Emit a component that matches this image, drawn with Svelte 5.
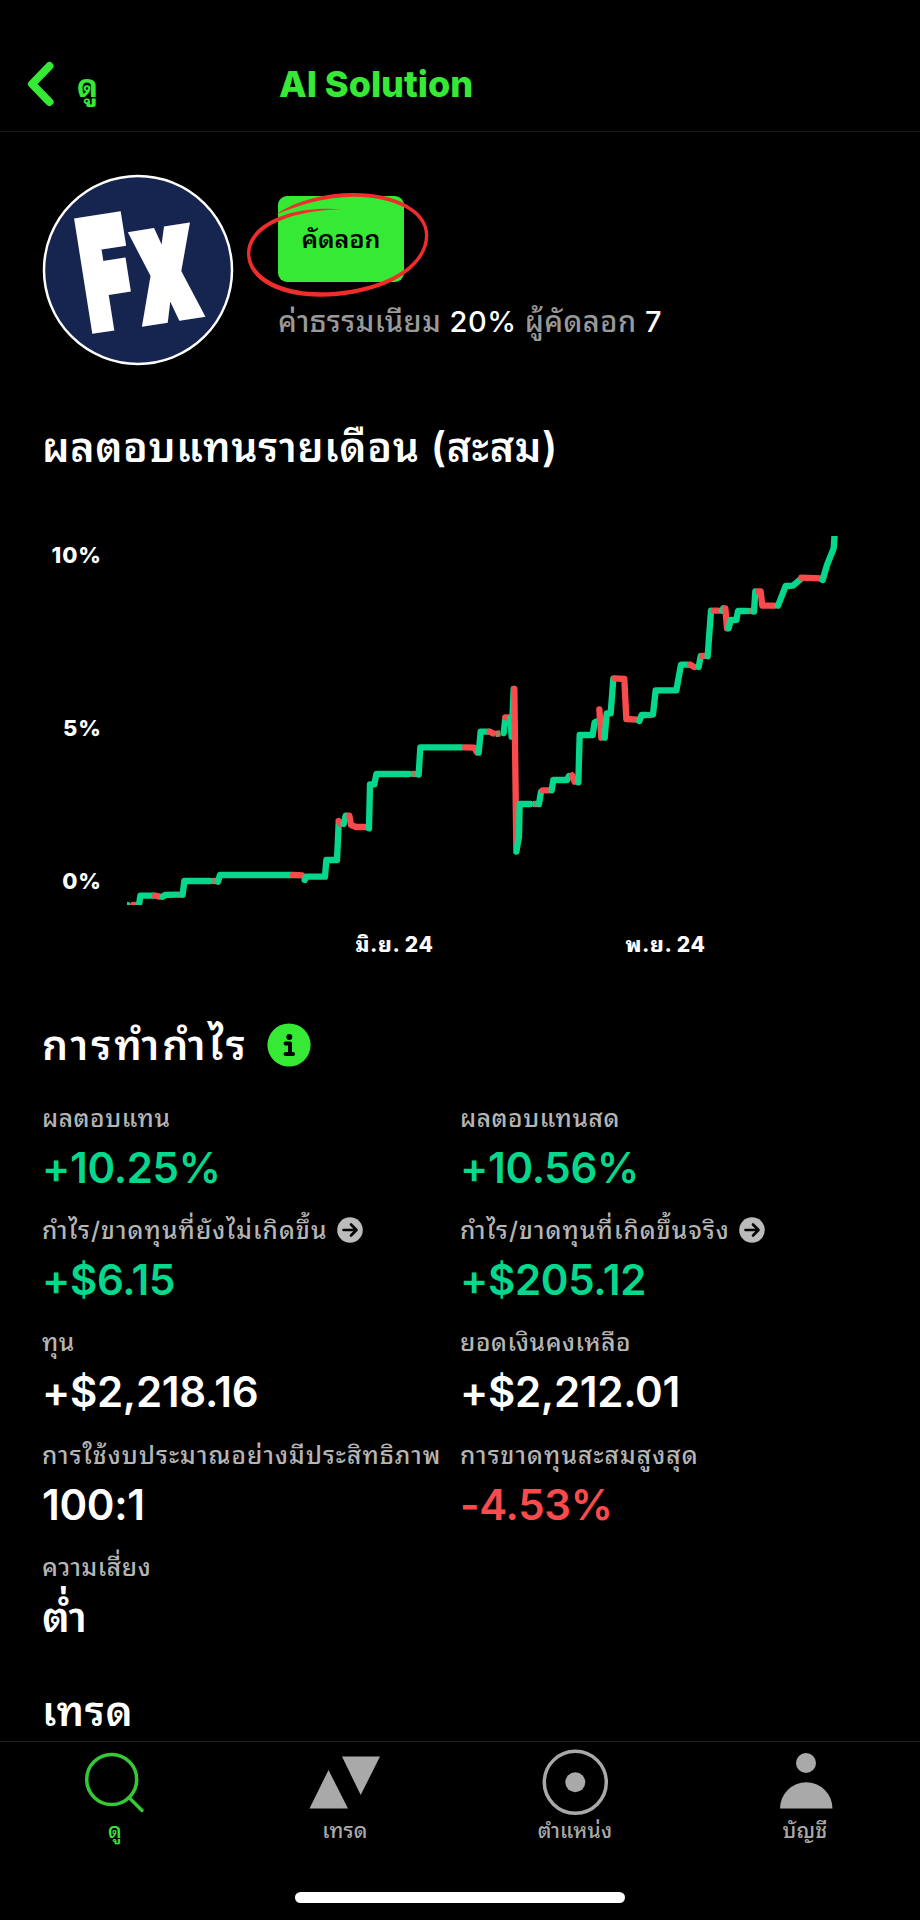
<script>
    let activeTab = 0;

    const axisY = ['10%', '5%', '0%'];
    const axisX = ['มิ.ย. 24', 'พ.ย. 24'];

    const stats = [
        { label: 'ผลตอบแทน', value: '+10.25%', tone: 'up' },
        { label: 'ผลตอบแทนสด', value: '+10.56%', tone: 'up' },
        { label: 'กำไร/ขาดทุนที่ยังไม่เกิดขึ้น', value: '+$6.15', tone: 'up', link: true },
        { label: 'กำไร/ขาดทุนที่เกิดขึ้นจริง', value: '+$205.12', tone: 'up', link: true },
        { label: 'ทุน', value: '+$2,218.16' },
        { label: 'ยอดเงินคงเหลือ', value: '+$2,212.01' },
        { label: 'การใช้งบประมาณอย่างมีประสิทธิภาพ', value: '100:1' },
        { label: 'การขาดทุนสะสมสูงสุด', value: '-4.53%', tone: 'down' },
        { label: 'ความเสี่ยง', value: 'ต่ำ' },
    ];

    const tabs = ['ดู', 'เทรด', 'ตำแหน่ง', 'บัญชี'];

    // g = gain, r = loss, m = flat
    const line = [
        ['m', '440,1124 457,1124'],
        ['m', '543,1083 562,1083'],
        ['m', '1143,762 1163,762'],
        ['m', '1395,642 1410,640'],
        ['m', '1508,852 1524,852'],
        ['m', '1853,585 1866,585'],
        ['m', '2153,273 2168,273'],
        ['g', '280,1155 291,1155'],
        ['r', '309,1155 314,1155'],
        ['g', '325,1162 330,1127 370,1127'],
        ['r', '374,1127 388,1130'],
        ['g', '397,1130 404,1125 436,1124'],
        ['g', '457,1124 462,1083 537,1083'],
        ['g', '563,1085 569,1065 785,1065'],
        ['r', '788,1065 815,1066'],
        ['g', '823,1080 828,1070 884,1070 888,1020 920,1020 925,910'],
        ['r', '925,903 930,912'],
        ['g', '940,912 946,887 950,887'],
        ['r', '957,887 962,915 977,921 1006,921'],
        ['g', '1016,925 1019,793 1032,793 1038,762 1136,762'],
        ['g', '1165,764 1170,682 1295,682'],
        ['r', '1304,682 1332,683 1340,697'],
        ['g', '1345,698 1351,635 1372,635'],
        ['r', '1378,635 1388,640'],
        ['g', '1420,639 1425,595'],
        ['r', '1425,592 1436,592'],
        ['g', '1440,595 1444,650 1450,507'],
        ['r', '1452,507 1458,985'],
        ['g', '1458,995 1466,950 1468,852 1500,852'],
        ['g', '1526,852 1532,815'],
        ['r', '1537,811 1555,811'],
        ['g', '1564,811 1569,780 1610,780 1616,768'],
        ['r', '1625,766 1633,785'],
        ['g', '1644,787 1648,645 1687,645 1693,607 1700,604'],
        ['r', '1707,568 1713,653'],
        ['g', '1723,653 1729,580 1741,580 1749,476'],
        ['r', '1753,475 1782,477 1788,597 1820,599'],
        ['g', '1827,603 1834,585 1848,585'],
        ['g', '1868,583 1876,511 1938,511 1952,434 1972,434'],
        ['r', '1980,434 1992,441'],
        ['g', '2005,441 2011,408'],
        ['r', '2016,408 2022,408'],
        ['g', '2032,409 2042,272'],
        ['r', '2050,272 2064,272'],
        ['g', '2075,272 2079,265'],
        ['r', '2085,265 2090,325'],
        ['g', '2095,325 2101,300 2118,300 2123,273 2148,273'],
        ['g', '2171,275 2175,214'],
        ['r', '2184,214 2191,214 2196,257 2232,257'],
        ['g', '2243,257 2266,198 2288,197 2310,178'],
        ['r', '2313,173 2370,175'],
        ['g', '2377,180 2390,135 2410,85 2413,40'],
    ];
</script>

<div class="screen">
    <header>
        <button class="back">
            <svg width="30" height="46" viewBox="0 0 30 46"><path d="M22.5 5 L5 23 L22.5 41" /></svg>
            <span>ดู</span>
        </button>
        <h1>AI Solution</h1>
    </header>

    <main>
        <section class="profile">
            <svg class="avatar" width="192" height="192" viewBox="0 0 192 192">
                <circle cx="96" cy="96" r="94" />
                <text class="big-f" transform="translate(49 154) rotate(-9) scale(.55 1)">F</text>
                <text class="big-x" transform="translate(104 146) rotate(-9) scale(.58 1)">x</text>
            </svg>
            <div class="profile-info">
                <div class="copy-wrap">
                    <button class="copy">คัดลอก</button>
                    <svg class="mark" width="190" height="112" viewBox="0 0 570 336">
                        <path d="M96 69 C160 25 250 3 331 3 C460 3 556 55 556 129 C556 240 400 314 231 314 C100 314 12 260 12 184 C12 100 130 40 296 52 C150 54 23 105 22 184 C22 250 110 301 231 301 C390 301 545 235 546 129 C546 60 450 14 331 14 C250 14 160 40 96 69Z" />
                    </svg>
                </div>
                <p class="fees">ค่าธรรมเนียม <b>20%</b> ผู้คัดลอก <b>7</b></p>
            </div>
        </section>

        <h2 class="chart-title">ผลตอบแทนรายเดือน (สะสม)</h2>
        <div class="chart">
            <div class="axis-y">
                {#each axisY as tick}
                    <span>{tick}</span>
                {/each}
            </div>
            <svg class="plot" width="711" height="369" viewBox="290 48 2133 1107">
                {#each line as [kind, points]}
                    <polyline class={kind} {points} />
                {/each}
            </svg>
        </div>
        <div class="axis-x">
            {#each axisX as tick}
                <span>{tick}</span>
            {/each}
        </div>

        <div class="title-row">
            <h2>การทำกำไร</h2>
            <svg class="info" width="44" height="44" viewBox="0 0 44 44">
                <circle class="disc" cx="22" cy="22" r="21.6" />
                <circle cx="22.3" cy="14" r="3" />
                <path d="M18.5 20.5 H23 V31 M18.5 31 H26" />
            </svg>
        </div>

        <div class="stats">
            {#each stats as stat}
                <div class="stat">
                    <div class="label" class:long={stat.label.length > 14}>
                        <span>{stat.label}</span>
                        {#if stat.link}
                            <svg class="go" width="26" height="26" viewBox="0 0 26 26">
                                <circle cx="13" cy="13" r="12.8" />
                                <path d="M6.5 13 H19 M14 7.5 L19.5 13 L14 18.5" />
                            </svg>
                        {/if}
                    </div>
                    <div class="value {stat.tone ?? ''}">{stat.value}</div>
                </div>
            {/each}
        </div>

        <h2 class="trades">เทรด</h2>
    </main>

    <nav>
        <div class="tabs">
            {#each tabs as tab, i}
                <button class="tab" class:active={activeTab === i} on:click={() => activeTab = i}>
                    <svg width="80" height="72" viewBox="0 0 80 72">
                        {#if i === 0}
                            <circle class="ring" cx="36.7" cy="37.5" r="25" />
                            <path class="ring" d="M54 55.5 L67 68.5" />
                        {:else if i === 1}
                            <path d="M23.5 28 L43 66.5 H4.5 Z M37 14.5 H75 L55.7 53 Z" />
                        {:else if i === 2}
                            <circle class="ring" cx="40.3" cy="40.3" r="31" />
                            <circle cx="40.3" cy="40.3" r="10" />
                        {:else}
                            <circle cx="41" cy="21" r="10" />
                            <path d="M15 66.5 A26 26 0 0 1 67.5 66.5 Z" />
                        {/if}
                    </svg>
                    <span>{tab}</span>
                </button>
            {/each}
        </div>
        <div class="home-bar"></div>
    </nav>
</div>

<style>
    :global(body) {
        margin: 0;
        background: #000;
    }

    .screen {
        width: 920px;
        height: 1920px;
        display: flex;
        flex-direction: column;
        overflow: hidden;
        background: #000;
        color: #fff;
        font-family: Inter, "Noto Sans Thai Looped", "Noto Looped Thai", Loma, "Noto Sans Thai", "Noto Sans", sans-serif;
    }

    h1, h2, p {
        margin: 0;
    }

    button {
        border: none;
        padding: 0;
        background: none;
        font-family: inherit;
        color: inherit;
        cursor: pointer;
    }

    header {
        box-sizing: border-box;
        height: 132px;
        padding: 61px 0 0 27px;
        display: flex;
        align-items: flex-start;
        border-bottom: 1px solid #1a1a1a;
        color: #35e935;
    }

    .back {
        width: 252px;
        height: 46px;
        display: flex;
        align-items: center;
        font-size: 31px;
        font-weight: 700;
    }

    .back svg {
        margin-right: 20px;
        fill: none;
        stroke: #35e935;
        stroke-width: 8;
        stroke-linecap: round;
        stroke-linejoin: round;
    }

    .back span {
        margin-top: -2px;
    }

    h1 {
        font-size: 36px;
        line-height: 46px;
        font-weight: 800;
    }

    main {
        height: 1609px;
        box-sizing: border-box;
        padding: 42px 42px 0;
        overflow: hidden;
    }

    .profile {
        display: flex;
        height: 192px;
    }

    .avatar {
        overflow: visible;
    }

    .avatar circle {
        fill: #15254f;
        stroke: #fff;
        stroke-width: 2.5;
    }

    .avatar text {
        fill: #fff;
        stroke: #fff;
        stroke-width: 12;
        font-family: Inter, sans-serif;
        font-weight: 900;
    }

    .big-f {
        font-size: 144px;
    }

    .big-x {
        font-size: 153px;
    }

    .profile-info {
        padding: 22px 0 0 44px;
    }

    .copy-wrap {
        position: relative;
        width: 126px;
        height: 86px;
    }

    .copy {
        width: 126px;
        height: 86px;
        padding-bottom: 4px;
        border-radius: 9px;
        background: #35e935;
        color: #000;
        font-size: 25px;
        font-weight: 600;
    }

    .mark {
        position: absolute;
        left: -35px;
        top: -4px;
        fill: #f02d2d;
        pointer-events: none;
    }

    .fees {
        margin-top: 20px;
        font-size: 29px;
        line-height: 40px;
        font-weight: 500;
        letter-spacing: 0.5px;
        color: #999;
        white-space: nowrap;
    }

    .fees b {
        font-weight: 500;
        color: #fff;
    }

    h2 {
        font-size: 41px;
        line-height: 56px;
        font-weight: 600;
        letter-spacing: 0.7px;
        white-space: nowrap;
    }

    .chart-title {
        margin-top: 53px;
    }

    .chart {
        display: flex;
        margin-top: 61px;
        height: 369px;
    }

    .axis-y {
        width: 60px;
        margin-right: 25px;
        display: grid;
        grid-template-rows: 173px 153px 30px;
        padding-top: 4px;
        text-align: right;
        font-size: 22px;
        line-height: 30px;
        font-weight: 800;
        letter-spacing: 1px;
    }

    .plot polyline {
        fill: none;
        stroke-width: 19;
        stroke-linecap: round;
        stroke-linejoin: round;
    }

    .plot .g {
        stroke: #05d88d;
    }

    .plot .r {
        stroke: #f94b4b;
    }

    .plot .m {
        stroke: #a4805f;
        stroke-linecap: butt;
    }

    .axis-x {
        display: grid;
        grid-template-columns: 271px 271px;
        margin: 25px 0 0 217px;
        text-align: center;
        font-size: 21px;
        line-height: 30px;
        font-weight: 800;
        letter-spacing: 0.6px;
    }

    .title-row {
        display: flex;
        align-items: center;
        gap: 18px;
        margin-top: 57px;
    }

    .title-row h2 {
        letter-spacing: 3px;
    }

    .info .disc {
        fill: #35e935;
    }

    .info path {
        fill: none;
        stroke: #000;
        stroke-width: 4;
        stroke-linecap: round;
        stroke-linejoin: round;
    }

    .stats {
        display: grid;
        grid-template-columns: 418px 417px;
        grid-auto-rows: 112.2px;
        margin-top: 25px;
    }

    .label {
        display: flex;
        align-items: center;
        gap: 9px;
        height: 40px;
        font-size: 24.5px;
        line-height: 40px;
        font-weight: 500;
        letter-spacing: 0.6px;
        color: #b5b5b5;
        white-space: nowrap;
    }

    .label.long {
        letter-spacing: 1.1px;
    }

    .go circle {
        fill: #bbb;
    }

    .go path {
        fill: none;
        stroke: #000;
        stroke-width: 2.6;
        stroke-linecap: round;
        stroke-linejoin: round;
    }

    .value {
        padding-top: 2px;
        font-size: 42px;
        line-height: 56px;
        font-weight: 600;
        letter-spacing: -0.3px;
        white-space: nowrap;
    }

    .up {
        color: #05d88d;
    }

    .down {
        color: #f94b4b;
    }

    .trades {
        margin-top: 24px;
    }

    nav {
        box-sizing: border-box;
        height: 179px;
        border-top: 1px solid #1f1f1f;
    }

    .tabs {
        display: grid;
        grid-template-columns: repeat(4, 230px);
        height: 150px;
    }

    .tab {
        display: flex;
        flex-direction: column;
        align-items: center;
        color: #a9a9a9;
        font-size: 21px;
        line-height: 34px;
        font-weight: 500;
        letter-spacing: 0.2px;
    }

    .tab svg {
        fill: #a9a9a9;
        overflow: visible;
    }

    .tab .ring {
        fill: none;
        stroke: #a9a9a9;
        stroke-width: 3.5;
        stroke-linecap: round;
    }

    .tab.active {
        color: #35e935;
    }

    .tab.active .ring {
        stroke: #35c935;
    }

    .home-bar {
        width: 330px;
        height: 11px;
        margin: 0 auto;
        border-radius: 6px;
        background: #fff;
    }
</style>
